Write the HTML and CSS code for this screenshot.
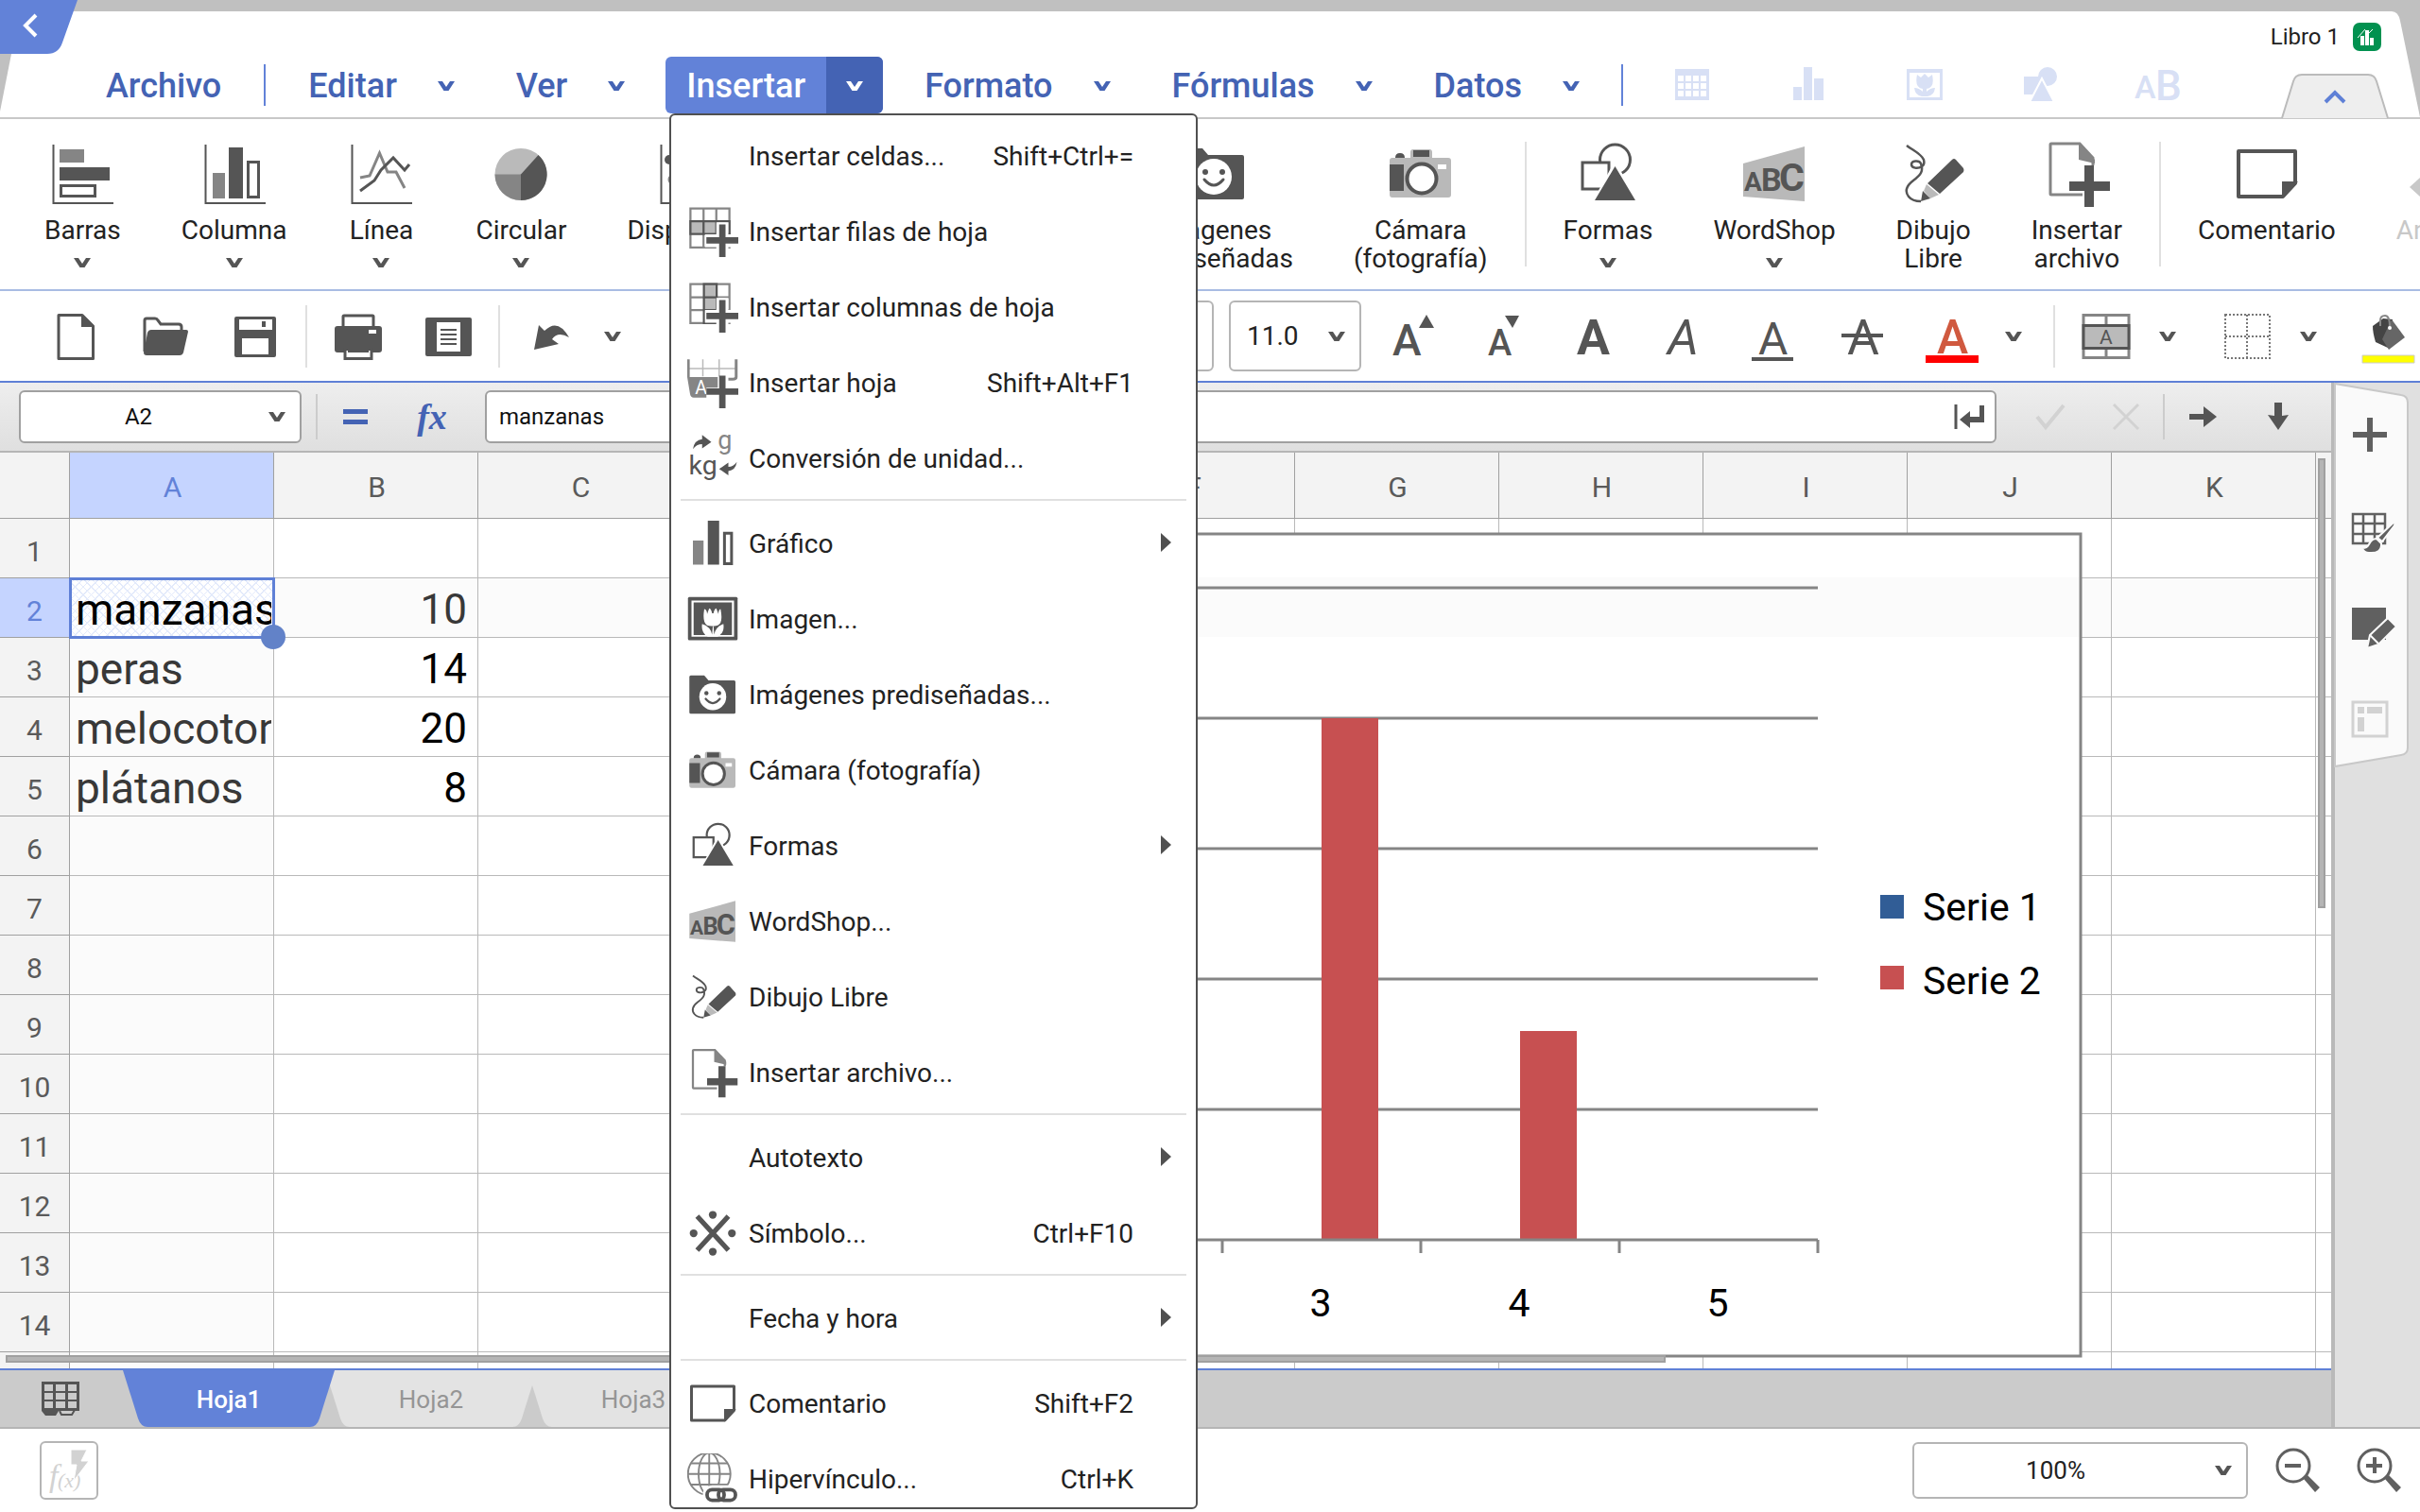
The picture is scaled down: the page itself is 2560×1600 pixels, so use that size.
FILE: index.html
```html
<!DOCTYPE html>
<html lang="es">
<head>
    <meta charset="UTF-8">
    <meta name="viewport" content="width=device-width, initial-scale=1.0">
    <title>Libro 1</title>
    <link rel="stylesheet" href="styles.css">
</head>
<body>
    <!-- shared icons -->
    <svg class="sprite" aria-hidden="true">
        <symbol id="chevron" viewBox="0 0 18 10"><path d="M0 0h5l4 6 4-6h5l-6.500 10h-5z" fill="currentColor"/></symbol>
        <symbol id="i-bars" viewBox="0 0 72 72">
            <path d="M5.500 5v62H69" fill="none" stroke="#555" stroke-width="2"/>
            <path d="M12 10h26v14H12z" fill="#858585"/><path d="M12 29h53v14H12z" fill="#555"/>
            <path d="M13.500 48.500h36v11h-36z" fill="#fff" stroke="#555" stroke-width="3"/>
        </symbol>
        <symbol id="i-column" viewBox="0 0 72 72">
            <path d="M5.500 5v62H69" fill="none" stroke="#555" stroke-width="2"/>
            <path d="M13 35h13v27H13z" fill="#858585"/><path d="M30 8h15v54H30z" fill="#555"/>
            <path d="M50.500 23.500h11v37h-11z" fill="#fff" stroke="#555" stroke-width="3"/>
        </symbol>
        <symbol id="i-line" viewBox="0 0 72 72">
            <path d="M5.500 5v62H69" fill="none" stroke="#555" stroke-width="2"/>
            <path d="M14 40l10-2 10.500-24L43 34h9l9 17" fill="none" stroke="#858585" stroke-width="3"/>
            <path d="M14 54l15-11 7-11 13-13 12 13 5-6" fill="none" stroke="#555" stroke-width="3"/>
        </symbol>
        <symbol id="i-pie" viewBox="0 0 72 72">
            <circle cx="36" cy="36.500" r="27.500" fill="#bababa"/>
            <path d="M36 36.500H8.500A27.500 27.500 0 0 0 36 64z" fill="#858585"/>
            <path d="M36 36.500L54.500 16A27.500 27.500 0 0 1 36 64z" fill="#555"/>
        </symbol>
        <symbol id="i-scatter" viewBox="0 0 72 72">
            <path d="M5.500 5v62H69" fill="none" stroke="#555" stroke-width="2"/>
            <circle cx="14" cy="21" r="5" fill="#555"/><circle cx="36" cy="28" r="5" fill="#555"/><circle cx="56" cy="15" r="5" fill="#555"/>
            <circle cx="18" cy="42" r="4" fill="none" stroke="#858585" stroke-width="3"/><circle cx="48" cy="45" r="4" fill="none" stroke="#858585" stroke-width="3"/>
        </symbol>
        <symbol id="i-chart" viewBox="0 0 72 72">
            <path d="M8 32h15v34H8z" fill="#858585"/><path d="M29 4h16v62H29z" fill="#555"/>
            <path d="M52.500 21.500h10v43h-10z" fill="#fff" stroke="#555" stroke-width="4"/>
        </symbol>
        <symbol id="i-image" viewBox="0 0 72 72">
            <rect x="1" y="5" width="70" height="61" rx="2" fill="#555"/>
            <path d="M6 10h60v51H6z" fill="#fff"/><path d="M9 12.500h54v46H9z" fill="#555"/>
            <path d="M24 22q4 1 4 7l3-8q3 1 4 7l2 0q1-6 4-7l3 8q0-6 3-7 4 20-4 23-3 1-5 1h-4q-3 0-6-1-7-4-4-23z" fill="#fff"/>
            <path d="M21 43q12 4 14 15l1-12h1l1 12q2-11 13-15 2 12-8 18H29q-10-6-8-18z" fill="#fff"/>
        </symbol>
        <symbol id="i-clipart" viewBox="0 0 72 72">
            <path d="M5 9h19l6 7h36q2 0 2 2v43q0 2-2 2H5q-2 0-2-2V11q0-2 2-2z" fill="#555"/>
            <circle cx="36" cy="39" r="19" fill="#fff"/>
            <circle cx="27" cy="34" r="3" fill="#555"/><circle cx="45" cy="34" r="3" fill="#555"/>
            <path d="M26 42q10 12 20 0" fill="none" stroke="#555" stroke-width="3" stroke-linecap="round"/>
        </symbol>
        <symbol id="i-camera" viewBox="0 0 72 72">
            <path d="M6 19h19v-6q0-3 3-3h17q3 0 3 3v6h17q3 0 3 3v36q0 3-3 3H6q-3 0-3-3V22q0-3 3-3z" fill="#b9b9b9"/>
            <path d="M28 11h17v7H28zM3 26h15v28H3zM9 19q0-5 5-5t5 5z" fill="#555"/>
            <circle cx="37" cy="41" r="15.500" fill="#fff" stroke="#555" stroke-width="4"/>
            <path d="M54 26h9v5h-9z" fill="#fff"/>
        </symbol>
        <symbol id="i-shapes" viewBox="0 0 72 72">
            <circle cx="43.500" cy="21" r="16" fill="#fff" stroke="#555" stroke-width="3"/>
            <path d="M9 24h28v28H9z" fill="#fff" stroke="#555" stroke-width="3"/>
            <path d="M43.500 22L69 68H18z" fill="#fff"/><path d="M43.500 28L65 64H22z" fill="#555"/>
        </symbol>
        <symbol id="i-wordshop" viewBox="0 0 72 72">
            <path d="M3 25L68 7v58L3 60z" fill="#b9b9b9"/>
            <g class="icon-text bold" fill="#555"><text x="4" y="54" font-size="28">A</text><text x="22" y="54" font-size="34">B</text><text x="41" y="54" font-size="41">C</text></g>
        </symbol>
        <symbol id="i-draw" viewBox="0 0 72 72">
            <path d="M8 6c6 5 15 8 18 15 1 4 0 6-2 7-4 3-11 2-11-2s8-5 10-1c3 8 0 12-8 18C7 49 6 55 10 60q4 5 13 5" fill="none" stroke="#555" stroke-width="2.500"/>
            <path d="M56 21q2-2 4 0l8 9q1 2 0 4L43 57 30 46z" fill="#555"/>
            <path d="M29 47l13 11-9 4-7-8z" fill="#bababa"/><path d="M25 54l8 8-10 3z" fill="#555"/>
        </symbol>
        <symbol id="i-file-add" viewBox="0 0 72 72">
            <path d="M42 58H9q-1 0-1-1V5q0-1 1-1h30l14 15v8" fill="none" stroke="#858585" stroke-width="3"/>
            <path d="M38 3l17 18v4L38 21z" fill="#858585"/>
            <path d="M44 27h10v17h17v10H54v17H44V54H28V44h16z" fill="#555"/>
        </symbol>
        <symbol id="i-comment" viewBox="0 0 72 72">
            <path d="M6 12h60v34L53 60H6z" fill="#fff" stroke="#555" stroke-width="4" stroke-linejoin="round"/><path d="M52 62V44h17z" fill="#555"/>
        </symbol>
        <symbol id="i-rows" viewBox="0 0 72 72">
            <path d="M4.500 3.500h55v55h-55zM23 3v56M41 3v56" fill="none" stroke="#858585" stroke-width="3"/>
            <path d="M4.500 21.500h55v18h-55z" fill="#bababa" stroke="#555" stroke-width="3"/><path d="M23 21v19M41 21v19" stroke="#555" stroke-width="3"/>
            <path d="M41 23h17v17h17v18H58v17H41V58H25V40h16z" fill="#fff"/><path d="M45 26h9v18h18v9H54v19h-9V53H27v-9h18z" fill="#555"/>
        </symbol>
        <symbol id="i-cols" viewBox="0 0 72 72">
            <path d="M4.500 3.500h55v55h-55zM3 22h57M3 40h57" fill="none" stroke="#858585" stroke-width="3"/>
            <path d="M23.500 3.500h18v55h-18z" fill="#bababa" stroke="#555" stroke-width="3"/><path d="M23 22h18M23 40h18" stroke="#555" stroke-width="3"/>
            <path d="M41 23h17v17h17v18H58v17H41V58H25V40h16z" fill="#fff"/><path d="M45 26h9v18h18v9H54v19h-9V53H27v-9h18z" fill="#555"/>
        </symbol>
        <symbol id="i-sheet" viewBox="0 0 72 72">
            <path d="M22 3v24M45 3v24M2 16h66" stroke="#bababa" stroke-width="2"/>
            <path d="M1.500 3v25M69 3v25q0 3-5 3h-6" fill="none" stroke="#858585" stroke-width="4"/>
            <path d="M0 28h43v15H27v14H9q-4 0-5-5z" fill="#858585"/>
            <text class="icon-text" x="11" y="52" font-size="26" fill="#fff">A</text>
            <path d="M45 26h9v18h18v9H54v19h-9V53H27v-9h18z" fill="#555"/>
        </symbol>
        <symbol id="i-unit" viewBox="0 0 72 72">
            <text class="icon-text" x="43" y="22" font-size="36" fill="#858585">g</text>
            <text class="icon-text" x="2" y="58" font-size="38" fill="#555">kg</text>
            <path d="M8 23q2-13 13-14V3l13 10-13 9v-6q-8 0-13 7zM70 41q-2 12-12 13v6L45 51l13-9v6q7 0 12-7z" fill="#555"/>
        </symbol>
        <symbol id="i-symbol" viewBox="0 0 72 72">
            <path d="M14 12l44 48M58 12L14 60" stroke="#555" stroke-width="7"/>
            <g fill="#555"><circle cx="36" cy="10" r="5.500"/><circle cx="36" cy="62" r="5.500"/><circle cx="9" cy="36" r="5.500"/><circle cx="63" cy="36" r="5.500"/></g>
        </symbol>
        <symbol id="i-link" viewBox="0 0 72 72">
            <g fill="none" stroke="#858585" stroke-width="2.500"><circle cx="31" cy="29" r="30"/><ellipse cx="31" cy="29" rx="15" ry="30"/><path d="M31-1v60M1 29h60M5 14h52M5 44h52"/></g>
            <rect x="22" y="45" width="50" height="27" rx="13" fill="#fff"/>
            <g fill="none" stroke="#555" stroke-width="5"><rect x="28" y="51" width="24" height="15" rx="7"/><rect x="44" y="51" width="24" height="15" rx="7"/></g>
        </symbol>
    </svg>

    <header class="header">
        <svg class="edge edge-left" viewBox="0 0 12 124"><path d="M0 0h12v57L0 118z" fill="#c0c0c0"/></svg>
        <svg class="edge edge-right" viewBox="0 0 30 112"><path d="M0 0q7 0 9 10l21 102V0z" fill="#c0c0c0"/></svg>
        <button class="back" aria-label="Atrás">
            <svg viewBox="0 0 82 57"><path d="M0 0h82L66 45q-4 12-16 12H0z" fill="#6282d8"/><path d="M38 16L27 27l11 11" fill="none" stroke="#fff" stroke-width="4"/></svg>
        </button>
        <div class="title-row">
            <span>Libro 1</span>
            <svg class="app-icon" viewBox="0 0 30 30"><rect width="30" height="30" rx="7" fill="#029150"/><path d="M8 14h4v10H8zM13 8h4v16h-4zM18 16h4v8h-4z" fill="#fff"/><path d="M5 16l8-9M17 11l4-4" stroke="#fff"/></svg>
        </div>
        <nav class="menubar">
            <div class="menu-item"><button>Archivo</button></div>
            <span class="menu-sep"></span>
            <div class="menu-item"><button>Editar</button><button class="drop" aria-label="Menú Editar"><svg class="chev"><use href="#chevron"/></svg></button></div>
            <div class="menu-item"><button>Ver</button><button class="drop" aria-label="Menú Ver"><svg class="chev"><use href="#chevron"/></svg></button></div>
            <div class="menu-item active"><button>Insertar</button><button class="drop" aria-label="Menú Insertar"><svg class="chev"><use href="#chevron"/></svg></button></div>
            <div class="menu-item"><button>Formato</button><button class="drop" aria-label="Menú Formato"><svg class="chev"><use href="#chevron"/></svg></button></div>
            <div class="menu-item"><button>Fórmulas</button><button class="drop" aria-label="Menú Fórmulas"><svg class="chev"><use href="#chevron"/></svg></button></div>
            <div class="menu-item"><button>Datos</button><button class="drop" aria-label="Menú Datos"><svg class="chev"><use href="#chevron"/></svg></button></div>
            <span class="menu-sep"></span>
            <div class="quick">
                <button aria-label="Tabla"><svg viewBox="0 0 48 40"><path fill-rule="evenodd" d="M6 3h36v33H6zM9 10v6h6v-6zm8 0v6h6v-6zm8 0v6h6v-6zm8 0v6h6v-6zM9 18v6h6v-6zm8 0v6h6v-6zm8 0v6h6v-6zm8 0v6h6v-6zM9 26v6h6v-6zm8 0v6h6v-6zm8 0v6h6v-6zm8 0v6h6v-6z"/></svg></button>
                <button aria-label="Gráfico"><svg viewBox="0 0 48 40"><path d="M8 22h9v14H8zM19 1h9v35h-9zM30 13h10v23H30z"/></svg></button>
                <button aria-label="Imagen"><svg viewBox="0 0 48 40"><path fill-rule="evenodd" d="M5 3h38v33H5zM8 7v26h32V7z"/><path d="M16 9l4 3 4-4 4 4 4-3q3 14-6 15v3q4-4 9-4-1 8-8 9h-6q-7-1-8-9 5 0 9 4v-3q-9-1-6-15z"/></svg></button>
                <button aria-label="Formas"><svg viewBox="0 0 48 40"><circle cx="31" cy="11" r="10"/><path d="M6 11h18v19H6z"/><path d="M25 13l13 25H12z" stroke="#fff" stroke-width="2"/></svg></button>
                <button aria-label="WordShop"><svg viewBox="0 0 48 40"><text class="icon-text" x="0" y="34" font-size="34">A</text><text class="icon-text" x="22" y="36" font-size="44">B</text></svg></button>
            </div>
            <button class="collapse" aria-label="Contraer">
                <svg viewBox="0 0 114 46"><path d="M1 47L13 8q2-7 9-7h70q7 0 9 7l12 39" fill="#eee" stroke="#bbb" stroke-width="2"/><path d="M47 30l10-10 10 10" fill="none" stroke="#5f80d6" stroke-width="4"/></svg>
            </button>
        </nav>
    </header>

    <section class="ribbon">
        <div class="ribbon-group charts">
            <button><svg><use href="#i-bars"/></svg><span>Barras</span><svg class="chev"><use href="#chevron"/></svg></button>
            <button><svg><use href="#i-column"/></svg><span>Columna</span><svg class="chev"><use href="#chevron"/></svg></button>
            <button><svg><use href="#i-line"/></svg><span>Línea</span><svg class="chev"><use href="#chevron"/></svg></button>
            <button><svg><use href="#i-pie"/></svg><span>Circular</span><svg class="chev"><use href="#chevron"/></svg></button>
            <button><svg><use href="#i-scatter"/></svg><span>Dispersión</span><svg class="chev"><use href="#chevron"/></svg></button>
        </div>
        <div class="ribbon-group">
            <button><svg><use href="#i-clipart"/></svg><span>Imágenes<br>prediseñadas</span></button>
            <button><svg><use href="#i-camera"/></svg><span>Cámara<br>(fotografía)</span></button>
        </div>
        <div class="ribbon-group split">
            <button><svg><use href="#i-shapes"/></svg><span>Formas</span><svg class="chev"><use href="#chevron"/></svg></button>
            <button><svg><use href="#i-wordshop"/></svg><span>WordShop</span><svg class="chev"><use href="#chevron"/></svg></button>
            <button><svg><use href="#i-draw"/></svg><span>Dibujo<br>Libre</span></button>
            <button><svg><use href="#i-file-add"/></svg><span>Insertar<br>archivo</span></button>
        </div>
        <div class="ribbon-group split">
            <button><svg><use href="#i-comment"/></svg><span>Comentario</span></button>
            <button class="disabled" disabled><svg viewBox="0 0 72 72"><path d="M0 50l22-20v40z" fill="#c8c8c8"/></svg><span>Anterior</span></button>
        </div>
    </section>

    <section class="toolbar">
        <button class="tool" aria-label="Nuevo"><svg viewBox="0 0 60 60"><path d="M12 7.500h25L48.500 19v34.500H12z" fill="#fff" stroke="#555" stroke-width="3" stroke-linejoin="round"/><path d="M36 7l14 13H36z" fill="#555"/></svg></button>
        <button class="tool" aria-label="Abrir"><svg viewBox="0 0 60 60"><path d="M8 46V13q0-2 2-2h9q2 0 3 2l3 4h19q3 0 3 3v5" fill="none" stroke="#555" stroke-width="3"/><path d="M15 23h37q2 0 2 2l-5 22q-1 3-4 3H10q-3 0-3-3l4-21q1-3 4-3z" fill="#555"/></svg></button>
        <button class="tool" aria-label="Guardar"><svg viewBox="0 0 60 60"><path fill-rule="evenodd" d="M10 9h40q2 0 2 2v39q0 2-2 2H10q-2 0-2-2V11q0-2 2-2zM13 12v11h35V12zm3 20v17h28V32z" fill="#555"/><path d="M37 14h4v6h-4z" fill="#555"/></svg></button>
        <span class="tool-sep"></span>
        <button class="tool" aria-label="Imprimir"><svg viewBox="0 0 60 60"><path d="M14 20V9q0-1 1-1h30q1 0 1 1v11" fill="#fff" stroke="#555" stroke-width="3"/><path d="M8 19h44q3 0 3 3v22q0 3-3 3H8q-3 0-3-3V22q0-3 3-3z" fill="#555"/><path d="M41 23h8v4h-8z" fill="#fff"/><path d="M16 43.500h28v10H16z" fill="#fff" stroke="#555" stroke-width="3"/><path d="M19 46h22" stroke="#555" stroke-width="2"/></svg></button>
        <button class="tool" aria-label="Vista previa"><svg viewBox="0 0 60 60"><rect x="6" y="10" width="49" height="41" rx="2" fill="#555"/><path d="M18 15h25v31H18z" fill="#fff"/><path d="M22 23h17M22 28h17M22 33h17M22 38h17" stroke="#555" stroke-width="2"/></svg></button>
        <span class="tool-sep"></span>
        <button class="tool" aria-label="Deshacer"><svg viewBox="0 0 60 60"><path d="M12 44l5-26 6 6q14-14 26 7-12-7-18 2l7 5z" fill="#555"/></svg></button>
        <button class="tool-drop" aria-label="Historial"><svg class="chev"><use href="#chevron"/></svg></button>
        <div class="font-controls">
            <span class="select-box font-name"><select aria-label="Fuente"><option>Calibri</option></select></span>
            <span class="select-box font-size"><select aria-label="Tamaño de fuente"><option>11.0</option></select><svg class="chev"><use href="#chevron"/></svg></span>
        </div>
        <button class="tool" aria-label="Aumentar"><svg viewBox="0 0 60 60"><text class="icon-text medium" x="8" y="50" font-size="46">A</text><path d="M36 21l8-14 8 14z"/></svg></button>
        <button class="tool" aria-label="Reducir"><svg viewBox="0 0 60 60"><text class="icon-text medium" x="14" y="50" font-size="38">A</text><path d="M32 8h15l-7 13z"/></svg></button>
        <button class="tool" aria-label="Negrita"><svg viewBox="0 0 60 60"><text class="icon-text bold" x="13" y="49" font-size="52">A</text></svg></button>
        <button class="tool" aria-label="Cursiva"><svg viewBox="0 0 60 60"><text class="icon-text italic" x="14" y="49" font-size="52">A</text></svg></button>
        <button class="tool" aria-label="Subrayado"><svg viewBox="0 0 60 60"><text class="icon-text" x="15" y="49" font-size="48">A</text><path d="M8 52h44v4H8z"/></svg></button>
        <button class="tool" aria-label="Tachado"><svg viewBox="0 0 60 60"><text class="icon-text" x="14" y="49" font-size="52">A</text><path d="M8 27h44v4H8z"/></svg></button>
        <button class="tool" aria-label="Color de fuente"><svg viewBox="0 0 60 60"><text class="icon-text medium" x="14" y="48" font-size="50" fill="#d0593f">A</text><path d="M2 50h56v8H2z" fill="#f00"/></svg></button>
        <button class="tool-drop gap" aria-label="Colores"><svg class="chev"><use href="#chevron"/></svg></button>
        <span class="tool-sep"></span>
        <button class="tool" aria-label="Combinar"><svg viewBox="0 0 60 60"><path d="M6 7.500h48v45H6zM30 7v10M30 43v10" fill="#fff" stroke="#858585" stroke-width="3"/><path d="M6 18.500h48v24H6z" fill="#bababa" stroke="#555" stroke-width="3"/><text class="icon-text" x="23" y="38" font-size="21">A</text></svg></button>
        <button class="tool-drop gap" aria-label="Opciones de combinar"><svg class="chev"><use href="#chevron"/></svg></button>
        <button class="tool" aria-label="Bordes"><svg viewBox="0 0 60 60"><path d="M7 7h47v46H7zM30 7v46M7 30h47" fill="none" stroke="#777" stroke-width="2" stroke-dasharray="2 2"/></svg></button>
        <button class="tool-drop gap" aria-label="Opciones de bordes"><svg class="chev"><use href="#chevron"/></svg></button>
        <button class="tool" aria-label="Relleno"><svg viewBox="0 0 60 60"><path d="M14 19l11-8 10 1-5 30-13-6q-3-10-3-17z" fill="#444"/><path d="M34 12l14 19-17 13-7-11z" fill="#666"/><path d="M22 19v-6q0-5 5-5t5 12" fill="none" stroke="#888" stroke-width="2"/><circle cx="32" cy="21" r="2" fill="#fff"/><path d="M3 50h55v8H3z" fill="#ff0" stroke="#ccc"/></svg></button>
    </section>

    <main class="workspace">
        <div class="sheet-area">
            <div class="formula-bar">
                <span class="select-box cell-name"><select aria-label="Celda"><option>A2</option></select><svg class="chev"><use href="#chevron"/></svg></span>
                <span class="bar-sep"></span>
                <button class="equals" aria-label="Igual"><svg viewBox="0 0 26 20"><path d="M0 2h26v5H0zM0 13h26v5H0z" fill="#4463b4"/></svg></button>
                <button class="fx">fx</button>
                <label class="formula-input"><input type="text" value="manzanas" aria-label="Fórmula"><svg viewBox="0 0 34 28"><path d="M2 1v26" stroke="#555" stroke-width="3"/><path d="M27 2h5v18H17v6L6 17l11-9v6h10z" fill="#555"/></svg></label>
                <div class="bar-actions">
                    <button aria-label="Aceptar" disabled><svg viewBox="0 0 32 30"><path d="M2 15l9 11L30 3" fill="none" stroke="#d2d2d2" stroke-width="4"/></svg></button>
                    <button aria-label="Cancelar" disabled><svg viewBox="0 0 32 30"><path d="M3 2l26 26M29 2L3 28" stroke="#d2d2d2" stroke-width="3"/></svg></button>
                    <span class="bar-sep"></span>
                    <button aria-label="Derecha"><svg viewBox="0 0 32 30"><path d="M2 12h15V4l14 11-14 11v-8H2z" fill="#555"/></svg></button>
                    <button aria-label="Abajo"><svg viewBox="0 0 32 30"><path d="M12 0h8v14l7-1-11 16L5 13l7 1z" fill="#555"/></svg></button>
                </div>
            </div>

            <div class="grid">
                <table>
                    <thead>
                        <tr><th class="corner"></th><th class="selected">A</th><th>B</th><th>C</th><th>D</th><th>E</th><th>F</th><th>G</th><th>H</th><th>I</th><th>J</th><th>K</th><th></th></tr>
                    </thead>
                    <tbody>
                        <tr><th>1</th><td></td><td></td><td></td><td></td><td></td><td></td><td></td><td></td><td></td><td></td><td></td><td></td></tr>
                        <tr class="current"><th class="selected">2</th><td class="cursor"><div>manzanas</div></td><td>10</td><td></td><td></td><td></td><td></td><td></td><td></td><td></td><td></td><td></td><td></td></tr>
                        <tr><th>3</th><td><div>peras</div></td><td>14</td><td></td><td></td><td></td><td></td><td></td><td></td><td></td><td></td><td></td><td></td></tr>
                        <tr><th>4</th><td><div>melocotones</div></td><td>20</td><td></td><td></td><td></td><td></td><td></td><td></td><td></td><td></td><td></td><td></td></tr>
                        <tr><th>5</th><td><div>plátanos</div></td><td>8</td><td></td><td></td><td></td><td></td><td></td><td></td><td></td><td></td><td></td><td></td></tr>
                        <tr><th>6</th><td></td><td></td><td></td><td></td><td></td><td></td><td></td><td></td><td></td><td></td><td></td><td></td></tr>
                        <tr><th>7</th><td></td><td></td><td></td><td></td><td></td><td></td><td></td><td></td><td></td><td></td><td></td><td></td></tr>
                        <tr><th>8</th><td></td><td></td><td></td><td></td><td></td><td></td><td></td><td></td><td></td><td></td><td></td><td></td></tr>
                        <tr><th>9</th><td></td><td></td><td></td><td></td><td></td><td></td><td></td><td></td><td></td><td></td><td></td><td></td></tr>
                        <tr><th>10</th><td></td><td></td><td></td><td></td><td></td><td></td><td></td><td></td><td></td><td></td><td></td><td></td></tr>
                        <tr><th>11</th><td></td><td></td><td></td><td></td><td></td><td></td><td></td><td></td><td></td><td></td><td></td><td></td></tr>
                        <tr><th>12</th><td></td><td></td><td></td><td></td><td></td><td></td><td></td><td></td><td></td><td></td><td></td><td></td></tr>
                        <tr><th>13</th><td></td><td></td><td></td><td></td><td></td><td></td><td></td><td></td><td></td><td></td><td></td><td></td></tr>
                        <tr><th>14</th><td></td><td></td><td></td><td></td><td></td><td></td><td></td><td></td><td></td><td></td><td></td><td></td></tr>
                        <tr><th></th><td></td><td></td><td></td><td></td><td></td><td></td><td></td><td></td><td></td><td></td><td></td><td></td></tr>
                    </tbody>
                </table>

                <!-- floating chart object -->
                <svg class="chart" viewBox="0 0 1262 872">
                    <path d="M1 1h1260v870H1z" fill="#fff" stroke="#858585" stroke-width="3"/>
                    <path d="M1 47h1258v63H1z" fill="#fbfbfb"/>
                    <path d="M100 58h883M100 196h883M100 334h883M100 472h883M100 610h883" stroke="#858585" stroke-width="3"/>
                    <path d="M458 196h60v552h-60zM668 527h60v221h-60z" fill="#c75051"/>
                    <path d="M100 748h883M353 748v14M563 748v14M773 748v14M983 748v14" fill="none" stroke="#858585" stroke-width="3"/>
                    <path d="M1049 383h25v25h-25z" fill="#315d96"/><path d="M1049 458h25v25h-25z" fill="#c75051"/>
                    <g class="chart-text">
                        <text x="1094" y="410">Serie 1</text><text x="1094" y="488">Serie 2</text>
                        <g text-anchor="middle"><text x="457" y="829">3</text><text x="667" y="829">4</text><text x="877" y="829">5</text></g>
                    </g>
                </svg>
                <span class="handle"></span>
                <span class="scroll-v"></span>
                <span class="scroll-h"></span>
            </div>

            <div class="tabs">
                <button class="sheet-list" aria-label="Lista de hojas"><svg viewBox="0 0 40 36"><path fill-rule="evenodd" d="M0 0h40v31H0zM3 3v7h9V3zm12 0v7h10V3zm13 0v7h9V3zM3 12v7h9v-7zm12 0v7h10v-7zm13 0v7h9v-7zM3 21v7h9v-7zm12 0v7h10v-7zm13 0v7h9v-7zM0 31h18l-3 5H4z" fill="#555"/><path d="M19 31l2 4h11l3-5" fill="none" stroke="#555" stroke-width="2"/></svg></button>
                <button class="tab active"><svg viewBox="0 0 224 60"><path d="M0 0h224l-16 51q-3 9-10 9H26q-7 0-10-9z"/></svg><span>Hoja1</span></button>
                <button class="tab"><svg viewBox="0 0 224 60"><path d="M0 0h224l-16 51q-3 9-10 9H26q-7 0-10-9z"/></svg><span>Hoja2</span></button>
                <button class="tab"><svg viewBox="0 0 224 60"><path d="M0 0h224l-16 51q-3 9-10 9H26q-7 0-10-9z"/></svg><span>Hoja3</span></button>
            </div>
        </div>

        <aside class="side-panel">
            <svg class="side-shape" viewBox="0 0 80 408"><path d="M0 1l70 12q7 1 7 8v365q0 7-7 8L0 406z" fill="#fafafa" stroke="#c8c8c8" stroke-width="2"/></svg>
            <button aria-label="Añadir"><svg viewBox="0 0 48 48"><path d="M21 6h6v15h15v6H27v15h-6V27H6v-6h15z" fill="#606060"/></svg></button>
            <button aria-label="Formato de celda"><svg viewBox="0 0 48 48"><path d="M6 7h34v31H6zM17 6v32M29 6v32M5 17h36M5 28h36" fill="none" stroke="#606060" stroke-width="2.500"/><path d="M51 14l-1 5-13 17-5-4z" fill="#606060" stroke="#fafafa" stroke-width="2"/><path d="M31 33l5 5q1 11-13 10-5 0-7-5 5 0 7-4 3-6 8-6z" fill="#606060" stroke="#fafafa" stroke-width="2"/></svg></button>
            <button aria-label="Formato de objeto"><svg viewBox="0 0 48 48"><path d="M5 5h36v34H5z" fill="#606060"/><path d="M43 16l9 9-19 19-12 4 3-14z" fill="#606060" stroke="#fafafa" stroke-width="2"/><path d="M24 34l9 9" stroke="#fafafa" stroke-width="2"/></svg></button>
            <button aria-label="Diseño" disabled><svg viewBox="0 0 48 48"><path d="M6 4h36v36H6z" fill="none" stroke="#d2d2d2" stroke-width="3"/><path d="M11 9h7v7h-7zM21 9h16v7H21zM11 20h7v15h-7z" fill="#d2d2d2"/></svg></button>
        </aside>
    </main>

    <footer class="status">
        <button class="auto-fx" aria-label="Función automática" disabled><svg viewBox="0 0 58 58"><text class="fx-text" x="8" y="46" font-size="34">f</text><text class="fx-text" x="17" y="47" font-size="22">(x)</text><path d="M31 7h17l-6 12h8L34 40l3-17h-6z" fill="#d2d2d2" stroke="#fff"/></svg></button>
        <div class="zoom">
            <span class="select-box zoom-level"><select aria-label="Zoom"><option>100%</option></select><svg class="chev"><use href="#chevron"/></svg></span>
            <button aria-label="Alejar"><svg viewBox="0 0 50 50"><circle cx="20" cy="20" r="17" fill="none" stroke="#606060" stroke-width="3"/><path d="M11 18h17v4H11zM31 34l4-4 13 13-5 5z" fill="#606060"/></svg></button>
            <button aria-label="Acercar"><svg viewBox="0 0 50 50"><circle cx="20" cy="20" r="17" fill="none" stroke="#606060" stroke-width="3"/><path d="M11 18h17v4H11zM18 11h4v17h-4zM31 34l4-4 13 13-5 5z" fill="#606060"/></svg></button>
        </div>
    </footer>

    <div class="dropdown">
        <button><i></i><span>Insertar celdas...</span><kbd>Shift+Ctrl+=</kbd></button>
        <button><svg><use href="#i-rows"/></svg><span>Insertar filas de hoja</span></button>
        <button><svg><use href="#i-cols"/></svg><span>Insertar columnas de hoja</span></button>
        <button><svg><use href="#i-sheet"/></svg><span>Insertar hoja</span><kbd>Shift+Alt+F1</kbd></button>
        <button><svg><use href="#i-unit"/></svg><span>Conversión de unidad...</span></button>
        <hr>
        <button class="sub"><svg><use href="#i-chart"/></svg><span>Gráfico</span></button>
        <button><svg><use href="#i-image"/></svg><span>Imagen...</span></button>
        <button><svg><use href="#i-clipart"/></svg><span>Imágenes prediseñadas...</span></button>
        <button><svg><use href="#i-camera"/></svg><span>Cámara (fotografía)</span></button>
        <button class="sub"><svg><use href="#i-shapes"/></svg><span>Formas</span></button>
        <button><svg><use href="#i-wordshop"/></svg><span>WordShop...</span></button>
        <button><svg><use href="#i-draw"/></svg><span>Dibujo Libre</span></button>
        <button><svg><use href="#i-file-add"/></svg><span>Insertar archivo...</span></button>
        <hr>
        <button class="sub"><i></i><span>Autotexto</span></button>
        <button><svg><use href="#i-symbol"/></svg><span>Símbolo...</span><kbd>Ctrl+F10</kbd></button>
        <hr>
        <button class="sub"><i></i><span>Fecha y hora</span></button>
        <hr>
        <button><svg><use href="#i-comment"/></svg><span>Comentario</span><kbd>Shift+F2</kbd></button>
        <button><svg><use href="#i-link"/></svg><span>Hipervínculo...</span><kbd>Ctrl+K</kbd></button>
    </div>
</body>
</html>
```

FILE: styles.css
```css
* {
    box-sizing: border-box;
}

body {
    margin: 0;
    height: 100vh;
    display: flex;
    flex-direction: column;
    overflow: hidden;
    position: relative;
    background-color: #fff;
    color: #222;
    font-family: Roboto, "Liberation Sans", sans-serif;
    font-size: 28px;
}

button,
input,
select {
    font: inherit;
    color: inherit;
    background: none;
    border: none;
    padding: 0;
    margin: 0;
}

svg {
    display: block;
    overflow: visible;
    flex-shrink: 0;
}

.sprite {
    display: none;
}

.chev {
    width: 18px;
    height: 10px;
    color: #555;
}

.icon-text { font-family: Roboto, sans-serif; }
.medium { font-weight: 500; }
.bold { font-weight: 700; }
.italic { font-style: italic; }

/* header */
.header {
    position: relative;
    flex-shrink: 0;
    border-top: 12px solid #c0c0c0;
    border-bottom: 2px solid #c8c8c8;
}

.edge {
    position: absolute;
}

.edge-left {
    left: 0;
    top: -12px;
    width: 12px;
    height: 124px;
}

.edge-right {
    right: 0;
    top: 0;
    width: 30px;
    height: 112px;
}

.back {
    position: absolute;
    left: 0;
    top: -12px;
}

.back svg {
    width: 82px;
    height: 57px;
}

.title-row {
    height: 48px;
    display: flex;
    justify-content: flex-end;
    align-items: center;
    gap: 14px;
    padding: 6px 41px 0 0;
    font-size: 24px;
}

.app-icon {
    width: 30px;
    height: 30px;
}

.menubar {
    display: flex;
    height: 64px;
    padding-left: 90px;
    gap: 22px;
    color: #4463b4;
    font-size: 36px;
    font-weight: 500;
}

.menu-item {
    display: flex;
    height: 60px;
}

.menu-item button {
    padding: 2px 22px 0;
}

.menu-item .drop {
    width: 60px;
    display: flex;
    align-items: center;
    justify-content: center;
}

.menu-item .chev {
    color: #4463b4;
}

.active.menu-item {
    background-color: #6282d8;
    color: #fff;
    border-radius: 6px;
    overflow: hidden;
}

.active .drop {
    background-color: #4463b4;
}

.active .chev {
    color: #fff;
}

.menu-sep {
    width: 2px;
    height: 44px;
    margin: 8px 1px;
    background-color: #6282d8;
}

.quick {
    display: flex;
    margin-left: -12px;
    height: 60px;
}

.quick button {
    width: 123px;
    display: flex;
    align-items: center;
    justify-content: center;
}

.quick svg {
    width: 48px;
    height: 40px;
    fill: #d8e0f5;
}

.collapse {
    margin: auto 33px 0 auto;
}

.collapse svg {
    width: 114px;
    height: 46px;
}

/* ribbon */
.ribbon {
    display: flex;
    flex-shrink: 0;
    height: 182px;
    overflow: hidden;
    border-bottom: 2px solid #a9bce3;
}

.ribbon-group {
    display: flex;
    gap: 64px;
    padding-top: 22px;
    flex-shrink: 0;
}

.ribbon-group.charts {
    width: 1200px;
    padding-left: 47px;
}

.ribbon-group.split {
    position: relative;
    padding-left: 80px;
}

.ribbon-group.split::before {
    content: "";
    position: absolute;
    left: 39px;
    top: 24px;
    width: 2px;
    height: 132px;
    background-color: #e0e0e0;
}

.ribbon-group button {
    display: flex;
    flex-direction: column;
    align-items: center;
    line-height: 30px;
}

.ribbon-group svg {
    width: 72px;
    height: 72px;
}

.ribbon-group span {
    margin-top: 9px;
    white-space: nowrap;
}

.ribbon-group .chev {
    width: 18px;
    height: 10px;
    margin-top: 14px;
}

.ribbon-group .disabled {
    color: #c8c8c8;
}

/* toolbar */
.toolbar {
    display: flex;
    flex-shrink: 0;
    align-items: center;
    height: 97px;
    padding-left: 32px;
    overflow: hidden;
    border-bottom: 2px solid #5f80d6;
}

.tool {
    display: flex;
    justify-content: center;
    flex: 0 0 95px;
}

.tool svg {
    width: 60px;
    height: 60px;
    fill: #555;
}

.tool-sep {
    flex: 0 0 2px;
    height: 66px;
    margin: 0 6px;
    background-color: #e0e0e0;
}

.tool-drop {
    flex: 0 0 35px;
    display: flex;
    justify-content: center;
}

.tool-drop.gap {
    margin-right: 19px;
}

.font-controls {
    flex: 0 0 782px;
    display: flex;
    justify-content: flex-end;
    gap: 16px;
    padding-right: 7px;
}

.select-box {
    position: relative;
    display: flex;
    border: 2px solid #b5b5b5;
    border-radius: 6px;
    background-color: #fff;
}

.select-box select {
    width: 100%;
    appearance: none;
}

.select-box .chev {
    position: absolute;
    right: 15px;
    top: 50%;
    margin-top: -5px;
    pointer-events: none;
}

.font-name,
.font-size {
    height: 75px;
}

.font-name {
    width: 380px;
}

.font-size {
    width: 140px;
}

.font-size select {
    padding-left: 17px;
}

/* workspace */
.workspace {
    flex: 1;
    min-height: 0;
    display: flex;
}

.sheet-area {
    flex: 1;
    min-width: 0;
    display: flex;
    flex-direction: column;
}

.formula-bar {
    display: flex;
    align-items: center;
    flex-shrink: 0;
    height: 74px;
    padding: 0 16px 0 20px;
    background: linear-gradient(#eee, #dfdfdf);
    border-bottom: 2px solid #b5b5b5;
    font-size: 24px;
    color: #111;
}

.cell-name {
    width: 299px;
    height: 56px;
    border-color: #a0a0a0;
}

.cell-name select {
    text-align-last: center;
    padding-right: 46px;
}

.bar-sep {
    width: 2px;
    height: 48px;
    margin: 0 15px;
    background-color: #ccc;
}

.equals svg {
    width: 26px;
    height: 20px;
    margin: 0 12px;
}

.fx {
    width: 88px;
    margin-left: 12px;
    margin-right: 12px;
    color: #4463b4;
    font-family: "Liberation Serif", serif;
    font-style: italic;
    font-weight: 700;
    font-size: 38px;
}

.formula-input {
    flex: 1;
    display: flex;
    align-items: center;
    height: 56px;
    padding: 0 9px 0 13px;
    border: 2px solid #a0a0a0;
    border-radius: 6px;
    background-color: #fff;
}

.formula-input input {
    flex: 1;
    outline: none;
}

.formula-input svg {
    width: 34px;
    height: 28px;
}

.bar-actions {
    display: flex;
    align-items: center;
    padding-left: 17px;
}

.bar-actions button {
    width: 80px;
    display: flex;
    justify-content: center;
}

.bar-actions svg {
    width: 32px;
    height: 30px;
}

.bar-actions .bar-sep {
    margin: 0 0 0 -1px;
}

/* grid */
.grid {
    position: relative;
    flex: 1;
    min-height: 0;
    overflow: hidden;
    border-bottom: 2px solid #5f80d6;
}

table {
    width: 2666px;
    table-layout: fixed;
    border-collapse: separate;
    border-spacing: 0;
}

th {
    width: 216px;
    height: 63px;
    padding: 0;
    background-color: #f3f3f3;
    border-right: 1px solid #a0a0a0;
    border-bottom: 1px solid #a0a0a0;
    color: #5a5a5a;
    font-size: 30px;
    font-weight: 400;
}

thead th {
    height: 70px;
    padding: 4px 0 0 2px;
}

th.corner {
    width: 74px;
}

th.selected {
    background-color: #c5d4ff;
    color: #6282d8;
}

tbody th {
    padding-top: 6px;
}

td {
    height: 63px;
    padding: 3px 11px 0 0;
    border-right: 1px solid #b9b9b9;
    border-bottom: 1px solid #b9b9b9;
    font-size: 44px;
    line-height: 58px;
    text-align: right;
    color: #000;
}

td:nth-child(2) {
    padding-left: 6px;
    padding-right: 2px;
    background-color: #fbfbfb;
    font-size: 46px;
    text-align: left;
    color: #383838;
}

td div {
    overflow: hidden;
    white-space: nowrap;
}

.current td {
    background-color: #fbfbfb;
    color: #383838;
}

.current td.cursor {
    color: #000;
    background: repeating-linear-gradient(45deg, transparent 0 5px, #e3eafb 5px 6px), repeating-linear-gradient(-45deg, #fff 0 5px, #e3eafb 5px 6px);
    outline: 3px solid #5f80d6;
    outline-offset: -2px;
}

.chart {
    position: absolute;
    left: 940px;
    top: 85px;
    width: 1262px;
    height: 872px;
}

.chart-text {
    font-size: 41px;
    fill: #000;
}

.handle {
    position: absolute;
    left: 276px;
    top: 182px;
    width: 26px;
    height: 26px;
    border-radius: 50%;
    background-color: #6282c8;
}

.scroll-v,
.scroll-h {
    position: absolute;
    background-color: #b5b5b5;
    border: 2px solid #a0a0a0;
}

.scroll-v {
    right: 6px;
    top: 6px;
    width: 8px;
    height: 476px;
}

.scroll-h {
    left: 6px;
    bottom: 6px;
    width: 1756px;
    height: 8px;
}

/* sheet tabs */
.tabs {
    display: flex;
    flex-shrink: 0;
    height: 60px;
    background-color: #cbcbcb;
}

.sheet-list {
    margin: 12px 46px 12px 44px;
}

.sheet-list svg {
    width: 40px;
    height: 36px;
}

.tab {
    position: relative;
    width: 224px;
    margin-right: -10px;
    padding-top: 2px;
    font-size: 26px;
    color: #959595;
}

.tab svg {
    position: absolute;
    left: 0;
    top: 0;
    width: 224px;
    height: 60px;
    fill: #e3e3e3;
}

.tab span {
    position: relative;
}

.tab.active {
    z-index: 1;
    color: #fff;
    font-weight: 500;
}

.tab.active svg {
    fill: #6282d8;
}

/* side panel */
.side-panel {
    position: relative;
    flex: 0 0 94px;
    display: flex;
    flex-direction: column;
    padding: 4px 16px 0 0;
    background-color: #e0e0e0;
    border-left: 4px solid #b9b9b9;
}

.side-shape {
    position: absolute;
    left: 0;
    top: 0;
    width: 80px;
    height: 408px;
}

.side-panel button {
    position: relative;
    height: 101px;
    display: flex;
    align-items: center;
    justify-content: center;
}

.side-panel button svg {
    width: 48px;
    height: 48px;
}

/* status bar */
.status {
    display: flex;
    flex-shrink: 0;
    justify-content: space-between;
    align-items: center;
    height: 90px;
    padding: 0 18px 0 42px;
    border-top: 2px solid #b5b5b5;
    font-size: 26px;
}

.auto-fx {
    width: 62px;
    height: 62px;
    border: 2px solid #b5b5b5;
    border-radius: 6px;
}

.auto-fx svg {
    width: 58px;
    height: 58px;
}

.fx-text {
    font-family: "Liberation Serif", serif;
    font-style: italic;
    fill: #d2d2d2;
}

.zoom {
    display: flex;
    align-items: center;
    gap: 28px;
}

.zoom-level {
    width: 355px;
    height: 60px;
}

.zoom-level select {
    text-align-last: center;
    padding-right: 52px;
}

.zoom button + button {
    margin-left: 8px;
}

.zoom button svg {
    width: 50px;
    height: 50px;
}

/* open menu */
.dropdown {
    position: absolute;
    left: 708px;
    top: 120px;
    bottom: 3px;
    width: 559px;
    padding-top: 3px;
    overflow: hidden;
    background-color: #fff;
    border: 2px solid #505050;
    border-radius: 6px;
}

.dropdown button {
    position: relative;
    display: flex;
    align-items: center;
    width: 100%;
    height: 80px;
    padding: 0 66px 0 17px;
}

.dropdown svg,
.dropdown i {
    width: 54px;
    height: 54px;
    margin-right: 11px;
}

.dropdown kbd {
    margin-left: auto;
    font-family: inherit;
}

.dropdown .sub::after {
    content: "";
    position: absolute;
    right: 26px;
    top: 29px;
    border-left: 11px solid #505050;
    border-top: 10px solid transparent;
    border-bottom: 10px solid transparent;
}

.dropdown hr {
    height: 2px;
    margin: 3px 10px 5px;
    border: none;
    background-color: #e0e0e0;
}
```
